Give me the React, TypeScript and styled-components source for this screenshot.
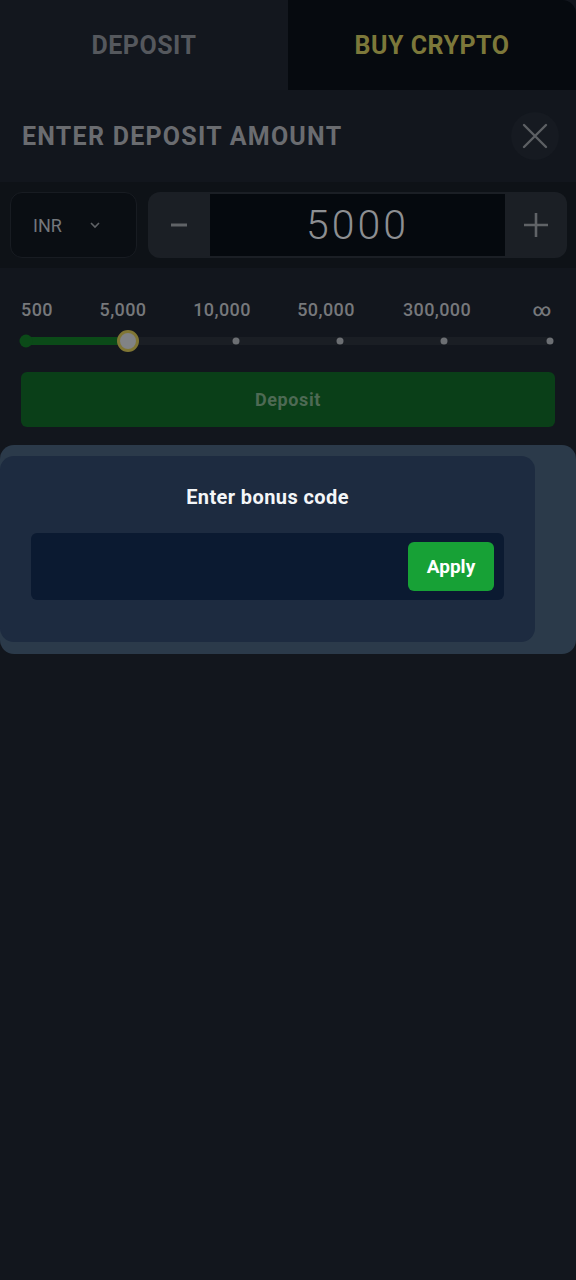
import { createGlobalStyle } from 'styled-components';
import styled from 'styled-components';

const GlobalStyle = createGlobalStyle`
	* {
		box-sizing: border-box;
	}
	html,
	body {
		margin: 0;
		padding: 0;
		background: #12161d;
	}
	body {
		font-family: Roboto, 'Noto Sans', 'Liberation Sans', sans-serif;
	}
	#root {
		min-height: 1280px;
		background: #12161d;
	}
`;

const Page = styled.div`
	width: 576px;
	min-height: 1280px;
	background: #12161d;
	display: flex;
	flex-direction: column;
`;

const Tabs = styled.div`
	display: grid;
	grid-template-columns: 1fr 1fr;
	height: 90px;
`;

const Tab = styled.div<{ $active?: boolean }>`
	display: flex;
	justify-content: center;
	align-items: center;
	font-size: 25px;
	font-weight: 700;
	letter-spacing: 0.5px;
	color: ${(p) => (p.$active ? '#7c783a' : '#55585d')};
	background: ${(p) => (p.$active ? '#060a0f' : '#13171e')};
	border-top-right-radius: ${(p) => (p.$active ? '14px' : '0')};
`;

const Header = styled.div`
	height: 92px;
	display: flex;
	justify-content: space-between;
	align-items: center;
	padding: 0 17px 0 22px;
	h2 {
		margin: 0;
		font-size: 25px;
		font-weight: 700;
		color: #6a6c70;
		letter-spacing: 1.25px;
	}
`;

const CloseButton = styled.div`
	width: 48px;
	height: 48px;
	border-radius: 50%;
	background: #161a21;
	display: flex;
	justify-content: center;
	align-items: center;
`;

const AmountRow = styled.div`
	height: 86px;
	background: #0e1217;
	display: flex;
	align-items: center;
	gap: 11px;
	padding: 0 9px 0 10px;
`;

const Currency = styled.div`
	width: 127px;
	height: 66px;
	border: 1px solid #181c22;
	border-radius: 12px;
	background: #0a0e13;
	display: flex;
	align-items: center;
	padding-left: 22px;
	gap: 27px;
	font-size: 18px;
	color: #74777b;
`;

const Stepper = styled.div`
	flex: 1;
	height: 66px;
	display: flex;
	border-radius: 12px;
	overflow: hidden;
	background: #1b1f25;
`;

const StepButton = styled.div`
	width: 62px;
	display: flex;
	justify-content: center;
	align-items: center;
`;

const AmountValue = styled.div`
	flex: 1;
	background: #05090e;
	margin: 2px 0;
	display: flex;
	justify-content: center;
	align-items: center;
	font-size: 41px;
	font-weight: 300;
	letter-spacing: 3px;
	color: #8d8f92;
`;

const SliderBlock = styled.div`
	padding: 31px 21px 0 21px;
`;

const Labels = styled.div`
	position: relative;
	height: 20px;
	font-size: 18px;
	font-weight: 500;
	letter-spacing: 0.4px;
	color: #76787b;
	span {
		position: absolute;
		top: 0;
		transform: translateX(-50%);
		white-space: nowrap;
	}
`;

const Track = styled.div`
	position: relative;
	margin: 18px 5px 0 4px;
	height: 8px;
	border-radius: 4px;
	background: #1a1e24;
`;

const Fill = styled.div`
	position: absolute;
	left: 0;
	top: 0;
	height: 8px;
	border-radius: 4px;
	background: #0b4a18;
`;

const Dot = styled.div<{ $first?: boolean }>`
	position: absolute;
	top: 50%;
	width: ${(p) => (p.$first ? '13px' : '7px')};
	height: ${(p) => (p.$first ? '13px' : '7px')};
	border-radius: 50%;
	background: ${(p) => (p.$first ? '#0b4a18' : '#6c6f73')};
	transform: translate(-50%, -50%);
`;

const Handle = styled.div`
	position: absolute;
	top: 50%;
	width: 22px;
	height: 22px;
	border-radius: 50%;
	background: #818385;
	border: 3px solid #807634;
	transform: translate(-50%, -50%);
`;

const DepositButton = styled.div`
	margin: 27px 21px 0 21px;
	height: 55px;
	border-radius: 6px;
	background: #0a3f18;
	display: flex;
	justify-content: center;
	align-items: center;
	font-size: 18px;
	font-weight: 700;
	letter-spacing: 0.6px;
	color: #4e6a54;
`;

const Sheet = styled.div`
	margin-top: 18px;
	background: #2b3a4a;
	border-radius: 14px;
	padding: 11px 41px 12px 0;
`;

const SheetInner = styled.div`
	background: #1d2b40;
	border-radius: 14px;
	padding: 29px 31px 42px 31px;
	h3 {
		margin: 0 0 24px 0;
		text-align: center;
		font-size: 20px;
		font-weight: 700;
		letter-spacing: 0.4px;
		color: #f4f6f8;
	}
`;

const CodeField = styled.div`
	height: 67px;
	background: #0b1a31;
	border-radius: 6px;
	display: flex;
	justify-content: flex-end;
	align-items: center;
	padding-right: 10px;
`;

const ApplyButton = styled.div`
	width: 86px;
	height: 49px;
	border-radius: 6px;
	background: #17a136;
	color: #ffffff;
	font-size: 19px;
	font-weight: 700;
	display: flex;
	justify-content: center;
	align-items: center;
`;

const labels = [
	{ text: '500', x: 16 },
	{ text: '5,000', x: 102 },
	{ text: '10,000', x: 201 },
	{ text: '50,000', x: 305 },
	{ text: '300,000', x: 416 },
	{ text: '∞', x: 521 },
];

const dots = [211, 315, 419, 525];

function App() {
	return (
		<Page>
			<GlobalStyle />
			<Tabs>
				<Tab>DEPOSIT</Tab>
				<Tab $active>BUY CRYPTO</Tab>
			</Tabs>
			<Header>
				<h2>ENTER DEPOSIT AMOUNT</h2>
				<CloseButton>
					<svg width="26" height="26" viewBox="0 0 26 26">
						<path d="M2 2 L24 24 M24 2 L2 24" stroke="#5d6064" strokeWidth="2.4" strokeLinecap="round" />
					</svg>
				</CloseButton>
			</Header>
			<AmountRow>
				<Currency>
					INR
					<svg width="12" height="8" viewBox="0 0 12 8">
						<path d="M2 2 L6 6 L10 2" stroke="#5f6266" strokeWidth="1.6" fill="none" />
					</svg>
				</Currency>
				<Stepper>
					<StepButton>
						<svg width="16" height="4" viewBox="0 0 16 4">
							<rect x="0" y="0.5" width="16" height="3" fill="#606367" />
						</svg>
					</StepButton>
					<AmountValue>5000</AmountValue>
					<StepButton>
						<svg width="24" height="24" viewBox="0 0 24 24">
							<path d="M12 0 V24 M0 12 H24" stroke="#606367" strokeWidth="2.6" />
						</svg>
					</StepButton>
				</Stepper>
			</AmountRow>
			<SliderBlock>
				<Labels>
					{labels.map((l) => (
						<span key={l.text} style={{ left: l.x }}>
							{l.text}
						</span>
					))}
				</Labels>
				<Track>
					<Fill style={{ width: 103 }} />
					<Dot $first style={{ left: 1 }} />
					{dots.map((d) => (
						<Dot key={d} style={{ left: d }} />
					))}
					<Handle style={{ left: 103 }} />
				</Track>
			</SliderBlock>
			<DepositButton>Deposit</DepositButton>
			<Sheet>
				<SheetInner>
					<h3>Enter bonus code</h3>
					<CodeField>
						<ApplyButton>Apply</ApplyButton>
					</CodeField>
				</SheetInner>
			</Sheet>
		</Page>
	);
}

export default App;
